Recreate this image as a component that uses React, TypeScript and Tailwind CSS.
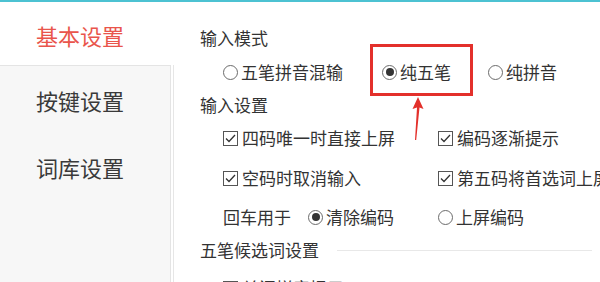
import React from "react";

const FONT = { fontFamily: '"Noto Sans CJK SC", "Noto Sans", sans-serif' };

function Radio({ checked, label }: { checked?: boolean; label: string }) {
  return (
    <div className="flex items-center whitespace-nowrap">
      <span className="flex h-[15px] w-[15px] shrink-0 items-center justify-center rounded-full border border-[#6b6b6b] bg-white">
        {checked && <span className="h-[8px] w-[8px] rounded-full bg-[#333]" />}
      </span>
      <span className="ml-[3px]">{label}</span>
    </div>
  );
}

function Check({ label }: { label: string }) {
  return (
    <div className="flex items-center whitespace-nowrap">
      <span className="flex h-[15px] w-[15px] shrink-0 items-center justify-center border border-[#555] bg-white">
        <svg width="11" height="9" viewBox="0 0 11 9" fill="none">
          <path d="M1 4.5 L4 7.5 L10 1" stroke="#333" strokeWidth="1.3" />
        </svg>
      </span>
      <span className="ml-[4px]">{label}</span>
    </div>
  );
}

export default function App() {
  return (
    <div className="relative flex h-[282px] w-[600px] flex-col overflow-hidden bg-white text-[#333]" style={FONT}>
      <div className="h-[2px] shrink-0 bg-[#4cc2d2]" />
      <div className="flex flex-1">
        {/* sidebar */}
        <div className="flex w-[174px] shrink-0 flex-col">
          <div className="flex h-[63px] items-center pl-[36px] pt-[2px] text-[22px] leading-[28px] text-[#e9554c]">
            基本设置
          </div>
          <div className="flex flex-1">
            <div className="flex-1 border-t border-r border-[#e4e4e4] bg-[#f7f7f7] text-[22px] leading-[28px] text-[#3a3a3a]">
              <div className="flex h-[67px] items-center pl-[36px]">按键设置</div>
              <div className="flex h-[67px] items-center pl-[36px]">词库设置</div>
            </div>
            <div className="w-[2px]" />
            <div className="w-[1px] bg-[#e6e6e6]" />
          </div>
        </div>

        {/* main */}
        <div className="flex min-w-0 flex-1 flex-col pl-[26px] text-[17px] leading-[24px]">
          <div className="mt-[24px]">输入模式</div>
          <div className="mt-[10px] flex pl-[23px]">
            <div className="w-[159px] shrink-0"><Radio label="五笔拼音混输" /></div>
            <div className="w-[106px] shrink-0"><Radio checked label="纯五笔" /></div>
            <Radio label="纯拼音" />
          </div>
          <div className="mt-[9px]">输入设置</div>
          <div className="mt-[9px] flex pl-[23px]">
            <div className="w-[215px] shrink-0"><Check label="四码唯一时直接上屏" /></div>
            <Check label="编码逐渐提示" />
          </div>
          <div className="mt-[16px] flex pl-[23px]">
            <div className="w-[215px] shrink-0"><Check label="空码时取消输入" /></div>
            <Check label="第五码将首选词上屏" />
          </div>
          <div className="mt-[15px] flex items-center pl-[23px]">
            <div className="flex w-[215px] shrink-0 items-center">
              <span className="w-[85px] shrink-0">回车用于</span>
              <Radio checked label="清除编码" />
            </div>
            <Radio label="上屏编码" />
          </div>
          <div className="mt-[9px] flex items-center pr-[8px]">
            <span className="whitespace-nowrap">五笔候选词设置</span>
            <div className="ml-[18px] h-[1px] flex-1 bg-[#e8e8e8]" />
          </div>
          <div className="mt-[14px] flex pl-[23px]">
            <Check label="关闭拼音提示" />
          </div>
        </div>
      </div>

      {/* annotation */}
      <div className="absolute left-[370px] top-[44px] h-[52px] w-[103px] border-[3px] border-[#e3302b]" />
      <svg className="absolute left-[405px] top-[95px]" width="20" height="50" viewBox="0 0 20 50">
        <polygon points="13,2 7.5,14 12,12.5 10,45 11.2,45 14.5,12.5 18.5,14" fill="#e3302b" />
      </svg>
    </div>
  );
}
